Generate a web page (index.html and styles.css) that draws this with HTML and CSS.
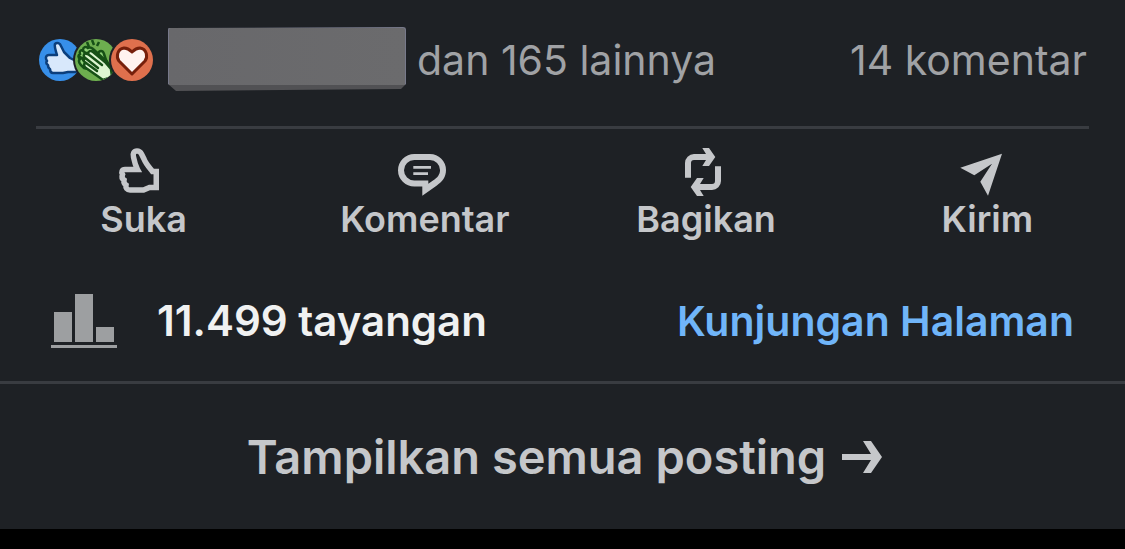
FILE: index.html
```html
<!DOCTYPE html>
<html lang="id">
<head>
  <meta charset="UTF-8" />
  <meta name="viewport" content="width=device-width, initial-scale=1.0" />
  <title>Posting</title>
  <link rel="stylesheet" href="styles.css">
</head>
<body>

  <main class="post">

    <!-- Reaksi dan komentar -->
    <section class="social">
      <div class="reactions">
        <svg class="reaction like" viewBox="0 0 42 42" aria-label="Suka">
          <path d="M16 5c2-2 5-1 6 2l3 6 6 6 4 2h8v12H29l-5 1H14c-2 0-3-2-3-4-2-1-2-3-2-4-2-1-2-3-1-4-2-3-1-6 2-6h8c-1-4-3-8-2-11z" fill="#d8e8fb" stroke="#0c3f7c" stroke-width="2.500" stroke-linejoin="round"/>
        </svg>
        <svg class="reaction clap" viewBox="0 0 42 42" aria-label="Rayakan">
          <path d="M14 8l-2-5M19 6l-2-5M22 7l2-4" stroke="#165016" stroke-width="2.500"/>
          <path d="M24 22l-1-7c1-4 5-4 6 0l2 6 5 8v8l-8-5z" fill="#8fd077" stroke="#165016" stroke-width="2.500" stroke-linejoin="round"/>
          <path d="M5 15c-1-3 1-4 3-4 0-3 3-4 5-2 2-1 4 0 5 1l13 12-8 10-14-3c-5-4-6-7-4-9-2-2-2-4 0-5z" fill="#8fd077" stroke="#165016" stroke-width="2.500"/>
          <path d="M9 18c-1-3 2-5 4-3 0-3 3-4 5-2l12 10 6 7 1 8-9 3-7-5-10-7c-3-2-2-5 0-5-3-2-4-4-2-6z" fill="#ddf6d1" stroke="#165016" stroke-width="2.500" stroke-linejoin="round"/>
          <path d="M13 15l14 11M9 18l14 11M11 24l11 8M4 17l5 4M8 12l4 3" fill="none" stroke="#165016" stroke-width="2.500" stroke-linecap="round"/>
        </svg>
        <svg class="reaction love" viewBox="0 0 42 42" aria-label="Dukung">
          <path d="M21 35L8 22c-3-4-2-12 5-13 4 0 6 2 8 4 2-2 4-4 8-4 7 1 8 9 5 13z" fill="#fff3ef" stroke="#76200b" stroke-width="3" stroke-linejoin="round"/>
        </svg>
      </div>
      <span class="redacted"></span>
      <a class="count" href="#">dan 165 lainnya</a>
      <a class="count comments" href="#">14 komentar</a>
    </section>

    <!-- Tombol aksi -->
    <section class="actions">
      <button class="action">
        <svg class="icon" viewBox="3 0 48 48">
          <path d="M45 23.500h-6.500C35 19 32 16 30 11L27.500 6C26 3 24.500 3 23 3c-3 0-4.500 2.500-3.500 6 1 5 1.500 8 4 12.500H11c-3 0-4 2.500-2.500 5-1 2.500 0 4.500 1.500 5.500-.5 2.500.5 4 2 5-.5 3 1 5 4 5h13.500l6-2.500H45" fill="none" stroke="currentColor" stroke-width="5.500"/>
          <path d="M39.500 21H45v21h-5.500z" fill="currentColor"/>
        </svg>
        <span class="label">Suka</span>
      </button>
      <button class="action">
        <svg class="icon" viewBox="0 0 48 48" fill="currentColor">
          <path fill-rule="evenodd" d="M16.300 6H32a16 16 0 0 1 16 16c0 7-3.500 11.500-9.500 15.700L24.300 47.700v-9.100h-8A16.300 16.300 0 0 1 16.300 6zm0 6a10.300 10.300 0 0 0 0 20.600h14v3.200l4.700-3.200c4.500-3 7-6 7-10.600a10 10 0 0 0-10-10z"/>
          <path d="M15.300 18H33v2.800H15.300zM15.300 24.200H30V27H15.300z"/>
        </svg>
        <span class="label">Komentar</span>
      </button>
      <button class="action">
        <svg class="icon" viewBox="0 0 48 48" fill="currentColor">
          <path d="M6 29.700V15a9 9 0 0 1 9-9h12l-3.700-6H30l6.300 9L30 18h-6.700l3.700-6H15a3 3 0 0 0-3 3v14.700z"/>
          <path d="M42 18.300V33a9 9 0 0 1-9 9H21l3.700 6H18l-6.300-9L18 30h6.700L21 36h12a3 3 0 0 0 3-3V18.300z"/>
        </svg>
        <span class="label">Bagikan</span>
      </button>
      <button class="action">
        <svg class="icon" viewBox="3 0 48 48" fill="currentColor">
          <path d="M3.300 19.700L45 5.700l-14 42-7.700-14 11.700-18-17.700 11.600z"/>
        </svg>
        <span class="label">Kirim</span>
      </button>
    </section>

    <!-- Statistik -->
    <section class="stats">
      <svg class="chart" viewBox="0 0 66 54" fill="currentColor">
        <path d="M3 18h18v30H3zM24 0h18v48H24zM45 33h18v15H45zM0 51h66v3H0z"/>
      </svg>
      <span class="views">11.499 tayangan</span>
      <a class="visits" href="#">Kunjungan Halaman</a>
    </section>

    <a class="show-all" href="#">
      Tampilkan semua posting
      <svg class="arrow" viewBox="0 0 40 32" fill="currentColor">
        <path d="M0 13h29L21 0h8l11 16-11 16h-8l8-13H0z"/>
      </svg>
    </a>

  </main>

</body>
</html>
```
FILE: styles.css
```css
* {
  margin: 0;
  padding: 0;
  box-sizing: border-box;
}

body {
  background: #000;
  color: #c5c7ca;
  font-family: Inter, 'Liberation Sans', sans-serif;
}

a {
  color: inherit;
  text-decoration: none;
}

svg {
  display: block;
  flex-shrink: 0;
}

.post {
  background: #1e2125;
}

/* Reaksi */
.social {
  display: flex;
  align-items: center;
  height: 129px;
  margin: 0 36px;
  padding: 0 2px 6px 3px;
  border-bottom: 3px solid #393c41;
}

.reactions {
  display: flex;
}

.reaction {
  width: 42px;
  height: 42px;
  border-radius: 50%;
  box-shadow: 0 0 0 2px #1e2125;
}

.reaction + .reaction {
  margin-left: -6px;
}

.like {
  background: #378fe9;
}

.clap {
  background: #6dae4f;
}

.love {
  background: #df704d;
}

.redacted {
  width: 238px;
  height: 64px;
  margin: 0 11px 2px 15px;
  border: 1px solid #77798a;
  border-bottom: 6px solid #515154;
  border-radius: 3px;
  background: linear-gradient(90deg, #68686b, #6b6b6d);
  clip-path: polygon(0 1px, 100% 0, 100% 57px, 233px 62px, 8px 100%, 0 57px);
}

.count {
  font-size: 41px;
  line-height: 48px;
  color: #a0a2a5;
}

.comments {
  margin-left: auto;
}

/* Aksi */
.actions {
  display: grid;
  grid-template-columns: repeat(4, 1fr);
  padding-top: 19px;
}

.action {
  display: flex;
  flex-direction: column;
  align-items: center;
  border: 0;
  background: transparent;
  color: #c5c7ca;
  font-family: inherit;
  cursor: pointer;
}

.icon {
  width: 48px;
  height: 48px;
}

.label {
  padding-left: 6px;
  font-size: 36px;
  font-weight: 600;
  line-height: 46px;
}

/* Statistik */
.stats {
  display: flex;
  align-items: center;
  height: 142px;
  padding: 18px 51px 0;
  border-bottom: 3px solid #393c41;
  font-size: 41px;
  font-weight: 600;
}

.chart {
  width: 66px;
  height: 54px;
  margin-right: 40px;
  color: #9d9fa1;
}

.views {
  font-size: 42px;
  color: #f0f1f1;
}

.visits {
  margin-left: auto;
  color: #70b5f9;
}

.show-all {
  display: flex;
  align-items: center;
  justify-content: center;
  gap: 16px;
  height: 145px;
  padding-left: 4px;
  font-size: 47px;
  font-weight: 600;
}

.arrow {
  width: 40px;
  height: 32px;
}
```
